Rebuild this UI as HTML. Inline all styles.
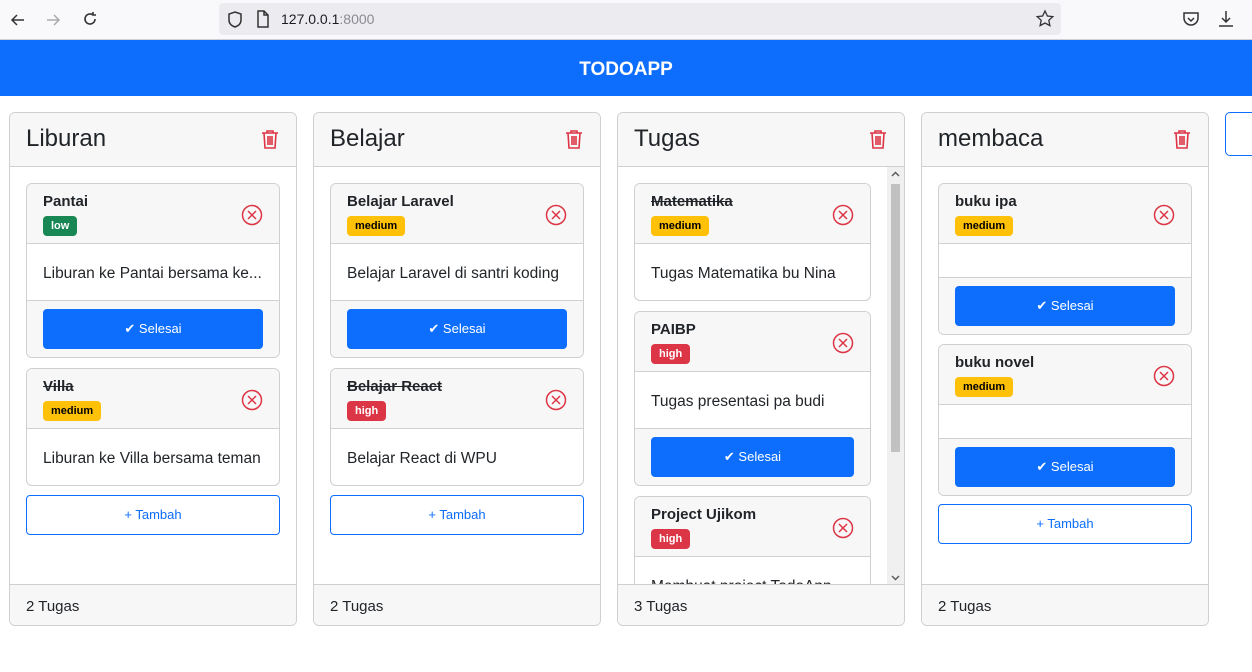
<!DOCTYPE html><html><head><meta charset="utf-8"><style>
*{box-sizing:border-box;margin:0;padding:0}
body{width:1252px;height:672px;overflow:hidden;background:#fff;font-family:"Liberation Sans","DejaVu Sans",sans-serif;color:#212529;position:relative}
.chrome{position:absolute;left:0;top:0;width:1252px;height:40px;background:#f9f9fb;border-bottom:1px solid #d0d0d6}
.url{position:absolute;left:219px;top:3px;width:842px;height:32px;background:#ececf0;border-radius:4px;font-size:14px;line-height:32px;padding-left:62px;color:#1c1b22}
.url span{color:#8a8a90}
.nav{position:absolute;left:0;top:40px;width:1252px;height:56px;background:#0d6efd;color:#fff;font-weight:bold;font-size:19px;text-align:center;line-height:60px}
.col{position:absolute;top:112px;width:288px;height:514px;border:1px solid #d0d0d0;border-radius:6px;overflow:hidden}
.ch{height:54px;background:#f7f7f7;border-bottom:1px solid #d0d0d0;font-size:24px;padding:12px 0 0 16px;position:relative}
.cf{position:absolute;left:0;bottom:0;width:100%;height:41px;background:#f7f7f7;border-top:1px solid #d0d0d0;font-size:15px;padding:13px 0 0 16px}
.trash{position:absolute;right:17px;top:16px}
.body{position:absolute;left:0;top:54px;width:100%;height:418px;overflow:hidden}
.card{position:absolute;left:16px;width:254px;border:1px solid #d0d0d0;border-radius:6px;overflow:hidden}
.hd{height:60px;background:#f7f7f7;border-bottom:1px solid #d0d0d0;position:relative;padding:9px 0 0 16px}
.t{font-weight:bold;font-size:15px}
.t.s{text-decoration:line-through}
.b{display:inline-block;font-size:11px;font-weight:bold;border-radius:4px;padding:4px 8px;margin-top:6px}
.low{background:#198754;color:#fff}.med{background:#ffc107;color:#000}.high{background:#dc3545;color:#fff}
.x{position:absolute;right:16px;top:20px}
.bd{height:56px;font-size:15.5px;padding:21px 0 0 16px;white-space:nowrap;overflow:hidden}
.bd.e{height:33px}
.ft{height:57px;background:#f7f7f7;border-top:1px solid #d0d0d0;padding:8px 16px 0}
.btn{height:40px;background:#0d6efd;color:#fff;border-radius:4px;text-align:center;font-size:13px;line-height:40px}
.add{position:absolute;left:16px;width:254px;height:40px;border:1px solid #0d6efd;border-radius:4px;color:#0d6efd;text-align:center;font-size:13px;line-height:38px}
.sb{position:absolute;right:0;top:0;width:17px;height:418px;background:#f0f0f0}
</style></head><body>
<div class="chrome">
<svg style="position:absolute;left:8px;top:10px" width="20" height="20" viewBox="0 0 20 20" fill="none" stroke="#333" stroke-width="1.5"><path d="M16 10H4M9 5l-5 5 5 5"/></svg>
<svg style="position:absolute;left:43px;top:10px" width="20" height="20" viewBox="0 0 20 20" fill="none" stroke="#aaa" stroke-width="1.5"><path d="M4 10h12M11 5l5 5-5 5"/></svg>
<svg style="position:absolute;left:80px;top:9px" width="20" height="20" viewBox="0 0 20 20" fill="none" stroke="#333" stroke-width="1.6"><path d="M15 10a5 5 0 1 1-2-4M13 3v3h3"/></svg>
<div class="url">127.0.0.1<span>:8000</span></div>
<svg style="position:absolute;left:226px;top:10px" width="18" height="20" viewBox="0 0 18 20" fill="none" stroke="#333" stroke-width="1.5"><path d="M9 2l6 2v6c0 4-3 6-6 7-3-1-6-3-6-7V4z"/></svg>
<svg style="position:absolute;left:256px;top:10px" width="14" height="18" viewBox="0 0 14 18" fill="none" stroke="#333" stroke-width="1.5"><path d="M2 1h6l4 4v12H2zM8 1v4h4"/></svg>
<svg style="position:absolute;left:1035px;top:9px" width="20" height="20" viewBox="0 0 20 20" fill="none" stroke="#333" stroke-width="1.3"><path d="M10 2l2.4 5 5.4.6-4 3.7 1.1 5.3L10 14l-4.9 2.6 1.1-5.3-4-3.7 5.4-.6z"/></svg>
<svg style="position:absolute;left:1182px;top:10px" width="18" height="18" viewBox="0 0 18 18" fill="none" stroke="#333" stroke-width="1.5"><path d="M2 3h14v5a7 7 0 0 1-14 0zM6 8l3 3 3-3"/></svg>
<svg style="position:absolute;left:1217px;top:9px" width="18" height="20" viewBox="0 0 18 20" fill="none" stroke="#333" stroke-width="1.5"><path d="M9 2v11M5 9l4 4 4-4M2 17h14"/></svg>
</div>
<div class="nav">TODOAPP</div>

<div class="col" style="left:9px">
<div class="ch">Liburan<svg class="trash" width="18" height="20" viewBox="0 0 18 20" fill="none" stroke="#dc3545" stroke-width="1.6"><path d="M1 4h16M6 4V2h6v2M3 4l1 15h10l1-15M7 7v9M9 7v9M11 7v9"/></svg></div>
<div class="body">
<div class="card" style="top:16px"><div class="hd"><div class="t">Pantai</div><span class="b low">low</span><svg class="x" width="22" height="22" viewBox="0 0 22 22" fill="none" stroke="#dc3545" stroke-width="1.5"><circle cx="11" cy="11" r="9.5"/><path d="M7 7l8 8M15 7l-8 8"/></svg></div><div class="bd">Liburan ke Pantai bersama ke...</div><div class="ft"><div class="btn">✔ Selesai</div></div></div>
<div class="card" style="top:201px"><div class="hd"><div class="t s">Villa</div><span class="b med">medium</span><svg class="x" width="22" height="22" viewBox="0 0 22 22" fill="none" stroke="#dc3545" stroke-width="1.5"><circle cx="11" cy="11" r="9.5"/><path d="M7 7l8 8M15 7l-8 8"/></svg></div><div class="bd">Liburan ke Villa bersama teman</div></div>
<div class="add" style="top:328px">+ Tambah</div>
</div>
<div class="cf">2 Tugas</div>
</div>

<div class="col" style="left:313px">
<div class="ch">Belajar<svg class="trash" width="18" height="20" viewBox="0 0 18 20" fill="none" stroke="#dc3545" stroke-width="1.6"><path d="M1 4h16M6 4V2h6v2M3 4l1 15h10l1-15M7 7v9M9 7v9M11 7v9"/></svg></div>
<div class="body">
<div class="card" style="top:16px"><div class="hd"><div class="t">Belajar Laravel</div><span class="b med">medium</span><svg class="x" width="22" height="22" viewBox="0 0 22 22" fill="none" stroke="#dc3545" stroke-width="1.5"><circle cx="11" cy="11" r="9.5"/><path d="M7 7l8 8M15 7l-8 8"/></svg></div><div class="bd">Belajar Laravel di santri koding</div><div class="ft"><div class="btn">✔ Selesai</div></div></div>
<div class="card" style="top:201px"><div class="hd"><div class="t s">Belajar React</div><span class="b high">high</span><svg class="x" width="22" height="22" viewBox="0 0 22 22" fill="none" stroke="#dc3545" stroke-width="1.5"><circle cx="11" cy="11" r="9.5"/><path d="M7 7l8 8M15 7l-8 8"/></svg></div><div class="bd">Belajar React di WPU</div></div>
<div class="add" style="top:328px">+ Tambah</div>
</div>
<div class="cf">2 Tugas</div>
</div>

<div class="col" style="left:617px">
<div class="ch">Tugas<svg class="trash" width="18" height="20" viewBox="0 0 18 20" fill="none" stroke="#dc3545" stroke-width="1.6"><path d="M1 4h16M6 4V2h6v2M3 4l1 15h10l1-15M7 7v9M9 7v9M11 7v9"/></svg></div>
<div class="body">
<div class="card" style="top:16px;width:237px"><div class="hd"><div class="t s">Matematika</div><span class="b med">medium</span><svg class="x" width="22" height="22" viewBox="0 0 22 22" fill="none" stroke="#dc3545" stroke-width="1.5"><circle cx="11" cy="11" r="9.5"/><path d="M7 7l8 8M15 7l-8 8"/></svg></div><div class="bd">Tugas Matematika bu Nina</div></div>
<div class="card" style="top:144px;width:237px"><div class="hd"><div class="t">PAIBP</div><span class="b high">high</span><svg class="x" width="22" height="22" viewBox="0 0 22 22" fill="none" stroke="#dc3545" stroke-width="1.5"><circle cx="11" cy="11" r="9.5"/><path d="M7 7l8 8M15 7l-8 8"/></svg></div><div class="bd">Tugas presentasi pa budi</div><div class="ft"><div class="btn">✔ Selesai</div></div></div>
<div class="card" style="top:329px;width:237px"><div class="hd"><div class="t">Project Ujikom</div><span class="b high">high</span><svg class="x" width="22" height="22" viewBox="0 0 22 22" fill="none" stroke="#dc3545" stroke-width="1.5"><circle cx="11" cy="11" r="9.5"/><path d="M7 7l8 8M15 7l-8 8"/></svg></div><div class="bd">Membuat project TodoApp</div></div>
<div class="sb"><div style="position:absolute;left:4px;top:17px;width:9px;height:268px;background:#c1c1c1"></div><svg style="position:absolute;left:4px;top:4px" width="9" height="6" viewBox="0 0 9 6" fill="none" stroke="#555" stroke-width="1.4"><path d="M1 5l3.5-3.5L8 5"/></svg><svg style="position:absolute;left:4px;bottom:4px" width="9" height="6" viewBox="0 0 9 6" fill="none" stroke="#555" stroke-width="1.4"><path d="M1 1l3.5 3.5L8 1"/></svg></div>
</div>
<div class="cf">3 Tugas</div>
</div>

<div class="col" style="left:921px">
<div class="ch">membaca<svg class="trash" width="18" height="20" viewBox="0 0 18 20" fill="none" stroke="#dc3545" stroke-width="1.6"><path d="M1 4h16M6 4V2h6v2M3 4l1 15h10l1-15M7 7v9M9 7v9M11 7v9"/></svg></div>
<div class="body">
<div class="card" style="top:16px"><div class="hd"><div class="t">buku ipa</div><span class="b med">medium</span><svg class="x" width="22" height="22" viewBox="0 0 22 22" fill="none" stroke="#dc3545" stroke-width="1.5"><circle cx="11" cy="11" r="9.5"/><path d="M7 7l8 8M15 7l-8 8"/></svg></div><div class="bd e"></div><div class="ft"><div class="btn">✔ Selesai</div></div></div>
<div class="card" style="top:177px"><div class="hd"><div class="t">buku novel</div><span class="b med">medium</span><svg class="x" width="22" height="22" viewBox="0 0 22 22" fill="none" stroke="#dc3545" stroke-width="1.5"><circle cx="11" cy="11" r="9.5"/><path d="M7 7l8 8M15 7l-8 8"/></svg></div><div class="bd e"></div><div class="ft"><div class="btn">✔ Selesai</div></div></div>
<div class="add" style="top:337px">+ Tambah</div>
</div>
<div class="cf">2 Tugas</div>
</div>

<div style="position:absolute;left:1225px;top:112px;width:60px;height:44px;border:1px solid #0d6efd;border-radius:5px"></div>
</body></html>
